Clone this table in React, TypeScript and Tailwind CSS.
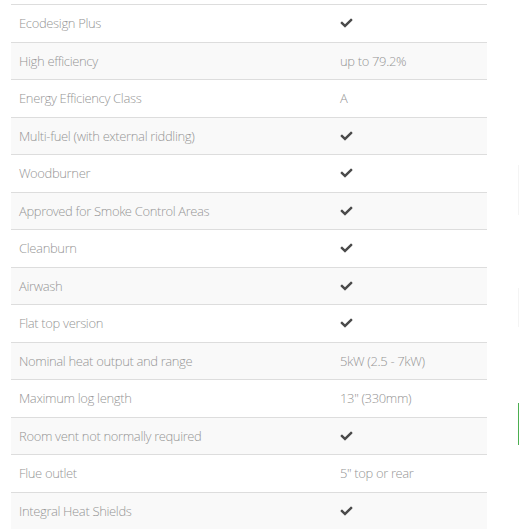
import React from "react";
import { FaCheck } from "react-icons/fa";

const rows: [string, string | null][] = [
  ["Ecodesign Plus", null],
  ["High efficiency", "up to 79.2%"],
  ["Energy Efficiency Class", "A"],
  ["Multi-fuel (with external riddling)", null],
  ["Woodburner", null],
  ["Approved for Smoke Control Areas", null],
  ["Cleanburn", null],
  ["Airwash", null],
  ["Flat top version", null],
  ["Nominal heat output and range", "5kW (2.5 - 7kW)"],
  ["Maximum log length", "13\" (330mm)"],
  ["Room vent not normally required", null],
  ["Flue outlet", "5\" top or rear"],
  ["Integral Heat Shields", null],
];

export default function App() {
  return (
    <div
      className="relative w-[519px] h-[531px] overflow-hidden bg-white"
      style={{ fontFamily: '"Open Sans Light", "Open Sans", "Liberation Sans", sans-serif' }}
    >
      <div className="pt-[4px] pl-[11px] w-[487px]">
        {rows.map(([label, value], i) => (
          <div
            key={i}
            className={`flex border-t border-[#dddddd] text-[13px] font-light tracking-[-0.35px] text-[#959595] leading-[20.5px] ${
              i % 2 === 1 ? "bg-[#f9f9f9]" : "bg-white"
            }`}
          >
            <div className="w-[321px] px-2 py-2">{label}</div>
            <div className="flex-1 px-2 py-2">
              {value === null ? (
                <FaCheck className="inline-block text-[#4a4a4a] w-[13px] h-[12px] -mt-[3px]" />
              ) : (
                value
              )}
            </div>
          </div>
        ))}
      </div>
      <div className="absolute left-[518px] top-[165px] w-px h-[50px] bg-[#f4f4f4]" />
      <div className="absolute left-[518px] top-[288px] w-px h-[39px] bg-[#f4f4f4]" />
      <div className="absolute left-[518px] top-[403px] w-px h-[42px] bg-[#4caf50]" />
    </div>
  );
}
